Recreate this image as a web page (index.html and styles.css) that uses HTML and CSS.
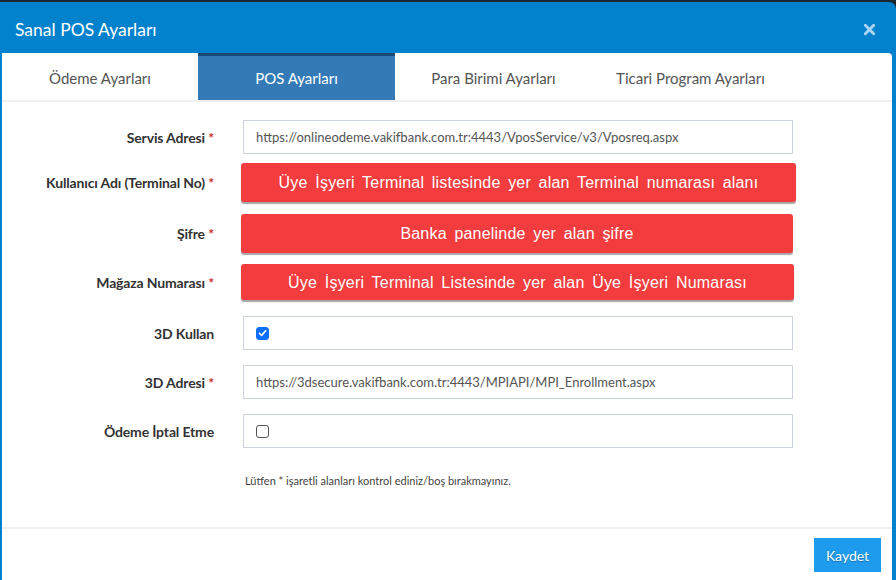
FILE: index.html
```html
<!DOCTYPE html>
<html lang="tr">
<head>
<meta charset="utf-8">
<title>Sanal POS Ayarları</title>
<link rel="stylesheet" href="styles.css">
</head>
<body>
<div class="topstrip"></div>
<div class="modal">
  <div class="modal-header">
    <h4 class="modal-title">Sanal POS Ayarları</h4>
    <span class="close"><svg viewBox="0 0 14 14" width="13" height="13"><path d="M2.5 2.5 L11.5 11.5 M11.5 2.5 L2.5 11.5" stroke="#a9d5f2" stroke-width="3.2" stroke-linecap="round"/></svg></span>
  </div>
  <div class="modal-content">
    <ul class="tabs">
      <li class="tab">Ödeme Ayarları</li>
      <li class="tab active">POS Ayarları</li>
      <li class="tab">Para Birimi Ayarları</li>
      <li class="tab">Ticari Program Ayarları</li>
    </ul>
    <div class="tab-sep"></div>
    <form class="form">
      <div class="row r1">
        <label class="lbl">Servis Adresi <span class="req">*</span></label>
        <div class="input">https://onlineodeme.vakifbank.com.tr:4443/VposService/v3/Vposreq.aspx</div>
      </div>
      <div class="row r2">
        <label class="lbl">Kullanıcı Adı (Terminal No) <span class="req">*</span></label>
        <div class="alert a1">Üye İşyeri Terminal listesinde yer alan Terminal numarası alanı</div>
      </div>
      <div class="row r3">
        <label class="lbl">Şifre <span class="req">*</span></label>
        <div class="alert a2">Banka panelinde yer alan şifre</div>
      </div>
      <div class="row r4">
        <label class="lbl">Mağaza Numarası <span class="req">*</span></label>
        <div class="alert a3">Üye İşyeri Terminal Listesinde yer alan Üye İşyeri Numarası</div>
      </div>
      <div class="row r5">
        <label class="lbl">3D Kullan</label>
        <div class="input"><span class="cb checked"><svg viewBox="0 0 12 12" width="12" height="12"><path d="M2.6 6.3 L5 8.6 L9.5 3.6" fill="none" stroke="#fff" stroke-width="1.8" stroke-linecap="round" stroke-linejoin="round"/></svg></span></div>
      </div>
      <div class="row r6">
        <label class="lbl">3D Adresi <span class="req">*</span></label>
        <div class="input">https://3dsecure.vakifbank.com.tr:4443/MPIAPI/MPI_Enrollment.aspx</div>
      </div>
      <div class="row r7">
        <label class="lbl">Ödeme İptal Etme</label>
        <div class="input"><span class="cb"></span></div>
      </div>
      <p class="note">Lütfen * işaretli alanları kontrol ediniz/boş bırakmayınız.</p>
    </form>
    <div class="footer">
      <button type="button" class="btn">Kaydet</button>
    </div>
  </div>
</div>
</body>
</html>
```
FILE: styles.css
```css
* { box-sizing: border-box; }
html, body { margin: 0; padding: 0; }
body {
  width: 896px;
  height: 580px;
  overflow: hidden;
  background: #1b2733;
  font-family: Lato, "Open Sans", sans-serif;
}
.topstrip { height: 2px; }
.modal {
  background: #0281cd;
  border-radius: 0 7px 0 0;
  padding: 0 4px 0 2px;
  height: 578px;
  display: flex;
  flex-direction: column;
}
.modal-header {
  height: 51px;
  display: flex;
  align-items: center;
  justify-content: space-between;
  padding: 0 16px 0 13px;
}
.modal-title {
  margin: 0;
  color: #fff;
  font-size: 17.5px;
  font-weight: 400;
  padding-top: 4px;
}
.close {
  display: flex;
  padding-top: 4px;
}
.modal-content {
  flex: 1;
  background: #fff;
  border-radius: 0 4px 0 0;
  display: flex;
  flex-direction: column;
}
.tabs {
  list-style: none;
  margin: 0;
  padding: 0;
  display: flex;
  height: 47px;
}
.tab {
  width: 197px;
  display: flex;
  align-items: center;
  justify-content: center;
  font-size: 15px;
  color: #555;
  padding-top: 3px;
}
.tab:first-child { width: 196px; }
.tab.active {
  background: #337ab7;
  color: #fff;
  border-top: 3px solid #1b4a76;
  padding-top: 0;
}
.tab-sep { height: 2px; background: #f0f0f0; }
.form {
  padding-top: 18px;
  flex: 1;
  margin: 0;
}
.row {
  display: flex;
  align-items: center;
}
.lbl {
  width: 226px;
  padding-right: 14px;
  text-align: right;
  font-size: 14px;
  font-weight: 700;
  color: #333;
  letter-spacing: -0.15px;
}
.req { color: #c9302c; }
.input {
  margin-left: 15px;
  width: 550px;
  height: 34px;
  border: 1px solid #ccd3dc;
  display: flex;
  align-items: center;
  padding-left: 12px;
  font-size: 13px;
  color: #555;
}
.alert {
  margin-left: 13px;
  height: 39px;
  background: #f23c3d;
  border-radius: 3px;
  box-shadow: 0 2px 1px rgba(0,0,0,0.35);
  color: #fff;
  font-family: "Liberation Sans", Arial, sans-serif;
  font-size: 16px;
  word-spacing: 3px;
  letter-spacing: 0.2px;
  display: flex;
  align-items: center;
  justify-content: center;
  padding-top: 1px;
}
.a1 { width: 555px; }
.a2 { width: 552px; }
.a3 { width: 553px; height: 36px; }
.r2 { margin-top: 9px; }
.r3 { margin-top: 12px; }
.r4 { margin-top: 11px; }
.r5 { margin-top: 16px; }
.r6 { margin-top: 15px; }
.r7 { margin-top: 15px; }
.cb {
  width: 13px;
  height: 13px;
  border: 1px solid #555;
  border-radius: 3px;
  display: inline-flex;
  align-items: center;
  justify-content: center;
  background: #fff;
}
.cb.checked { background: #0d6efd; border-color: #0d6efd; }
.note {
  margin: 26px 0 0 243px;
  font-size: 11px;
  color: #444;
}
.footer {
  border-top: 2px solid #f0f0f0;
  height: 53px;
  display: flex;
  justify-content: flex-end;
  align-items: flex-start;
  padding: 9px 11px 0 0;
}
.btn {
  background: #1f9bee;
  border: 0;
  color: #fff;
  width: 67px;
  height: 34px;
  font-family: Lato, "Open Sans", sans-serif;
  font-size: 14px;
  text-shadow: 0 1px 1px rgba(0,0,0,0.3);
  border-radius: 0;
}
```
